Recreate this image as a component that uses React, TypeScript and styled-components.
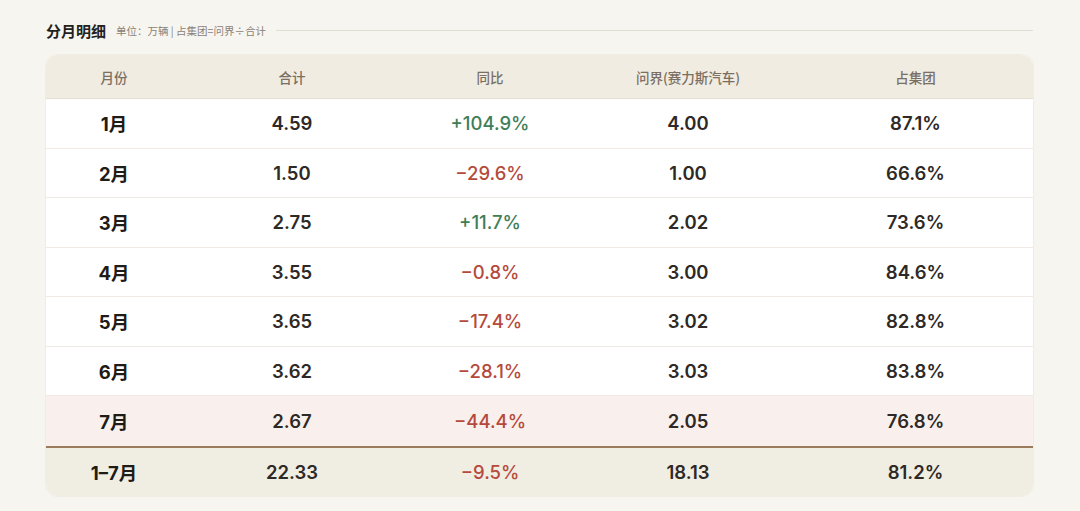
import React from "react";
import styled, { createGlobalStyle } from "styled-components";

const Global = createGlobalStyle`
  html, body { margin: 0; padding: 0; background: #f7f5f0; }
  body { font-family: "Inter", "Noto Sans CJK SC", sans-serif; }
`;

const Page = styled.div`
  width: 1080px;
  height: 511px;
  box-sizing: border-box;
  padding: 19px 47px 0 46px;
  background: #f7f5f0;
`;

const TitleBar = styled.div`
  display: flex;
  align-items: center;
  height: 22px;
  margin-bottom: 14px;
`;

const Title = styled.span`
  font-family: "Noto Sans CJK SC", sans-serif;
  font-size: 15px;
  font-weight: 700;
  color: #231f1b;
`;

const Sub = styled.span`
  font-family: "Noto Sans CJK SC", sans-serif;
  font-size: 10.5px;
  color: #8a8278;
  margin-left: 10px;
  white-space: pre;
`;

const Rule = styled.div`
  flex: 1;
  height: 1px;
  background: #e2ddd2;
  margin-left: 10px;
  margin-top: 1px;
`;

const Card = styled.div`
  border-radius: 12px;
  overflow: hidden;
  background: #ffffff;
  box-shadow: 0 0 0 1px #f1ede4;
`;

const Row = styled.div<{ $kind?: "head" | "body" | "hl" | "total" }>`
  display: grid;
  grid-template-columns: 136px 220px 176px 220px 1fr;
  align-items: center;
  box-sizing: border-box;
  height: ${(p) => (p.$kind === "head" ? "44px" : p.$kind === "total" ? "50px" : "49.5px")};
  background: ${(p) =>
    p.$kind === "head" ? "#f0ece2" : p.$kind === "hl" ? "#f9f0ed" : p.$kind === "total" ? "#f0ede3" : "#ffffff"};
  border-bottom: ${(p) => (p.$kind === "head" ? "1px solid #e6dfd1" : p.$kind === "body" ? "1px solid #f0ece5" : "none")};
  border-top: ${(p) => (p.$kind === "total" ? "2px solid #9c7b5d" : "none")};
`;

const Head = styled.div`
  text-align: center;
  font-family: "Noto Sans CJK SC", sans-serif;
  font-size: 13.5px;
  color: #7b6f62;
  font-weight: 500;
`;

const Cell = styled.div<{ $tone?: "up" | "down" | "month" | "plain" }>`
  text-align: center;
  font-family: "Inter", "Noto Sans CJK SC", sans-serif;
  font-size: 18.5px;
  font-weight: ${(p) => (p.$tone === "month" ? 700 : p.$tone === "up" || p.$tone === "down" ? 500 : 600)};
  color: ${(p) =>
    p.$tone === "up" ? "#3f7e57" : p.$tone === "down" ? "#b54a3c" : p.$tone === "month" ? "#1f1b17" : "#2e2925"};
`;

type R = { m: string; t: string; y: string; w: string; s: string };

const rows: R[] = [
  { m: "1月", t: "4.59", y: "+104.9%", w: "4.00", s: "87.1%" },
  { m: "2月", t: "1.50", y: "−29.6%", w: "1.00", s: "66.6%" },
  { m: "3月", t: "2.75", y: "+11.7%", w: "2.02", s: "73.6%" },
  { m: "4月", t: "3.55", y: "−0.8%", w: "3.00", s: "84.6%" },
  { m: "5月", t: "3.65", y: "−17.4%", w: "3.02", s: "82.8%" },
  { m: "6月", t: "3.62", y: "−28.1%", w: "3.03", s: "83.8%" },
  { m: "7月", t: "2.67", y: "−44.4%", w: "2.05", s: "76.8%" },
];

const total: R = { m: "1–7月", t: "22.33", y: "−9.5%", w: "18.13", s: "81.2%" };

const tone = (y: string) => (y.startsWith("+") ? "up" : "down");

export default function App() {
  return (
    <>
      <Global />
      <Page>
        <TitleBar>
          <Title>分月明细</Title>
          <Sub>单位：万辆 | 占集团=问界÷合计</Sub>
          <Rule />
        </TitleBar>
        <Card>
          <Row $kind="head">
            <Head>月份</Head>
            <Head>合计</Head>
            <Head>同比</Head>
            <Head>问界(赛力斯汽车)</Head>
            <Head>占集团</Head>
          </Row>
          {rows.map((r, i) => (
            <Row key={r.m} $kind={i === rows.length - 1 ? "hl" : "body"}>
              <Cell $tone="month">{r.m}</Cell>
              <Cell>{r.t}</Cell>
              <Cell $tone={tone(r.y)}>{r.y}</Cell>
              <Cell>{r.w}</Cell>
              <Cell>{r.s}</Cell>
            </Row>
          ))}
          <Row $kind="total">
            <Cell $tone="month">{total.m}</Cell>
            <Cell>{total.t}</Cell>
            <Cell $tone="down">{total.y}</Cell>
            <Cell>{total.w}</Cell>
            <Cell>{total.s}</Cell>
          </Row>
        </Card>
      </Page>
    </>
  );
}
